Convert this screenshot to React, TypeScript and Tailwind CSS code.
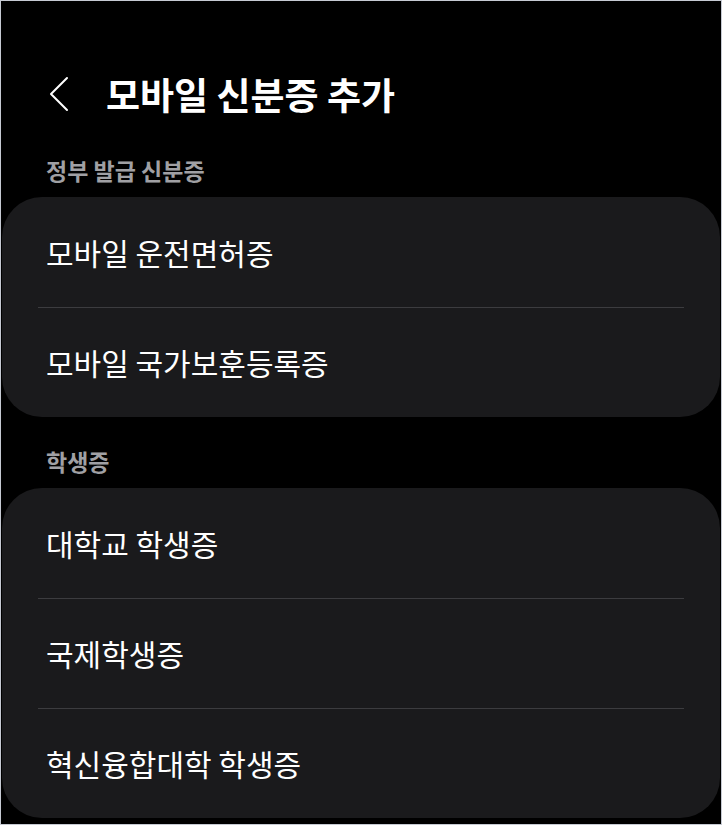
import React from "react";

const sections = [
  {
    title: "정부 발급 신분증",
    items: ["모바일 운전면허증", "모바일 국가보훈등록증"],
  },
  {
    title: "학생증",
    items: ["대학교 학생증", "국제학생증", "혁신융합대학 학생증"],
  },
];

export default function App() {
  return (
    <div
      className="w-[722px] h-[825px] bg-black border border-[#c6cad3] overflow-hidden"
      style={{ fontFamily: '"Noto Sans CJK KR", "Noto Sans", sans-serif' }}
    >
      {/* HEADER */}
      <div className="mt-[61px] h-[64px] flex items-center">
        <svg
          width="22"
          height="36"
          viewBox="0 0 22 36"
          className="ml-[47px]"
          fill="none"
          stroke="#ffffff"
          strokeWidth="2"
          strokeLinecap="round"
          strokeLinejoin="round"
        >
          <path d="M19 2 L3 18 L19 34" />
        </svg>
        <h1 className="ml-[36px] text-[37px] font-bold text-white leading-none">
          모바일 신분증 추가
        </h1>
      </div>

      {sections.map((section) => (
        <div key={section.title}>
          <div className="h-[71px] pt-[17px] pl-[45px] flex items-center text-[23px] font-bold text-[#a0a0a4]">
            {section.title}
          </div>
          <div className="mx-px rounded-[40px] bg-[#1a1a1c]">
            {section.items.map((item, i) => (
              <div key={item}>
                {i > 0 && <div className="mx-9 h-px bg-[#3c3c3f]" />}
                <div
                  className={
                    i > 0
                      ? "h-[109px] flex items-center pl-[44px] text-[30px] text-white"
                      : "h-[110px] flex items-center pl-[44px] text-[30px] text-white"
                  }
                >
                  {item}
                </div>
              </div>
            ))}
          </div>
        </div>
      ))}
    </div>
  );
}
